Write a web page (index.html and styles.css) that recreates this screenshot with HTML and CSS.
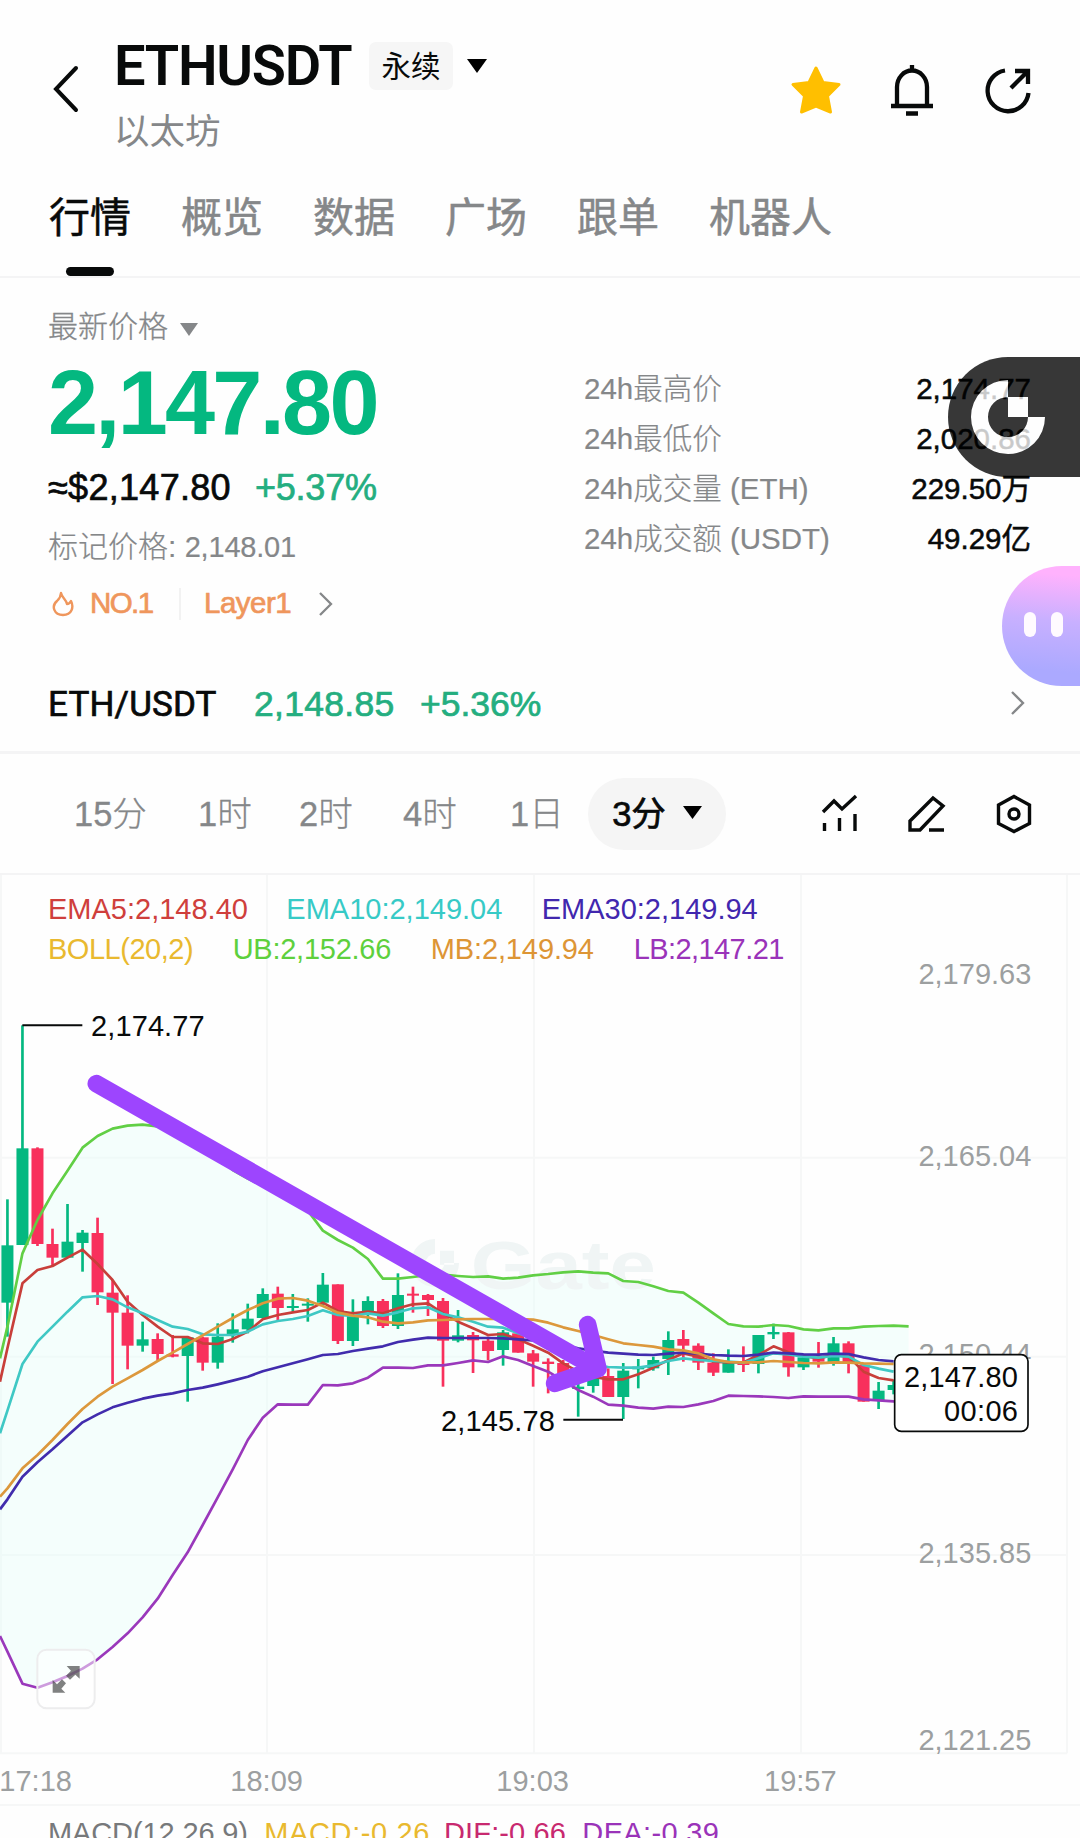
FILE: index.html
```html
<!DOCTYPE html>
<html lang="zh-CN">
<head>
  <meta charset="UTF-8" />
  <meta name="viewport" content="width=device-width, initial-scale=1" />
  <title>ETHUSDT 永续</title>
  <link rel="stylesheet" href="styles.css">
</head>
<body>

  <header class="header">
    <svg class="back" width="28" height="50" viewBox="0 0 28 50"><path d="M25 4 L5 25 L25 46" /></svg>
    <div class="pair">
      <div class="pair-top">
        <h1>ETHUSDT</h1>
        <span class="chip">永续</span>
        <svg class="caret" width="20" height="14" viewBox="0 0 20 14"><path d="M0 0H20L10 14Z" /></svg>
      </div>
      <div class="pair-name">以太坊</div>
    </div>
    <div class="header-icons">
      <svg width="52" height="52" viewBox="0 0 52 52"><path class="star" d="M26 4 L33 18.500 L49 20.500 L37.500 32 L40.500 48 L26 42 L11.500 48 L14.500 32 L3 20.500 L19 18.500 Z" /></svg>
      <svg class="line-icon" width="52" height="52" viewBox="0 0 52 52"><path d="M26 1V7M11 42V23a15 16.500 0 0 1 30 0V42M5 42H47M20 49.500H32" /></svg>
      <svg class="line-icon" width="52" height="52" viewBox="0 0 52 52"><path d="M23 6.500A20.500 20.500 0 1 0 46.500 29M29 24L45 8M33 7H46V20" /></svg>
    </div>
  </header>

  <nav class="tabs">
    <a class="active">行情</a>
    <a>概览</a>
    <a>数据</a>
    <a>广场</a>
    <a>跟单</a>
    <a>机器人</a>
  </nav>

  <section class="quote">
    <div class="quote-left">
      <div class="label">最新价格 <svg width="18" height="13" viewBox="0 0 18 13"><path d="M0 0H18L9 13Z" /></svg></div>
      <div class="price">2,147.80</div>
      <div class="fiat"><span>≈$2,147.80</span><span class="up">+5.37%</span></div>
      <div class="mark">标记价格: <span>2,148.01</span></div>
      <div class="tags">
        <svg class="flame" width="24" height="26" viewBox="0 0 24 26"><path d="M10 2C11 7 15 8 16 13C18 13 19 12 20 10C23 16 21 24 12 24C3 24 0 15 6 10C8 8 10 6 10 2Z" /></svg>
        <span class="rank">NO.1</span>
        <i></i>
        <span class="layer">Layer1</span>
        <svg class="chev" width="14" height="24" viewBox="0 0 14 24"><path d="M1 1L12 12L1 23" /></svg>
      </div>
    </div>
    <div class="stats">
      <div><span>24h最高价</span><b>2,174.77</b></div>
      <div><span>24h最低价</span><b>2,020.86</b></div>
      <div><span>24h成交量 (ETH)</span><b>229.50万</b></div>
      <div><span>24h成交额 (USDT)</span><b>49.29亿</b></div>
    </div>
  </section>

  <section class="spot">
    <span class="spot-pair">ETH/USDT</span>
    <span class="spot-price">2,148.85</span>
    <span class="spot-change">+5.36%</span>
    <svg class="chev" width="14" height="24" viewBox="0 0 14 24"><path d="M1 1L12 12L1 23" /></svg>
  </section>

  <section class="frames">
    <div class="frame-list">
      <span class="f15">15分</span>
      <span class="f1">1时</span>
      <span class="f2">2时</span>
      <span class="f4">4时</span>
      <span class="fd">1日</span>
    </div>
    <div class="frame-active"><span>3分</span><svg width="19" height="13" viewBox="0 0 19 13"><path d="M0 0H19L9.500 13Z" /></svg></div>
    <div class="tools">
      <svg width="40" height="40" viewBox="0 0 40 40"><path d="M3 18L14 7L22 15L36 2M4.500 37V29M19.500 37V24M35 37V20" /></svg>
      <svg width="40" height="40" viewBox="0 0 40 40"><path d="M3 36V27L26 4L36 12L13 36ZM22 36H37" /></svg>
      <svg width="40" height="40" viewBox="0 0 40 40"><path d="M20 2.500L35.500 11V29.500L20 37.500L4.500 29.500V11Z" /><circle cx="20" cy="20" r="5" /></svg>
    </div>
  </section>

  <section class="chart">
    <svg viewBox="0 0 3240 2889">
      <g transform="translate(0 345)">
        <path class="grid" d="M3 -345V2290M801 -345V2290M1602 -345V2290M2403 -345V2290M3201 -345V2290M0 503H3201M0 1100H3201M0 1695H3201M0 2290H3201M0 2445H3240" />
        <path id="band" class="band" />
        <!-- watermark -->
        <g class="watermark">
          <path d="M1305 747A72 72 0 1 0 1377 819H1333A28 28 0 1 1 1305 791ZM1320 782H1362V824H1320Z" />
          <text x="1412" y="896" textLength="556" lengthAdjust="spacingAndGlyphs">Gate</text>
        </g>
        <g class="axis">
          <text x="3094" y="-18">2,179.63</text>
          <text x="3094" y="527">2,165.04</text>
          <text x="3094" y="1121">2,150.44</text>
          <text x="3094" y="1720">2,135.85</text>
          <text x="3094" y="2279">2,121.25</text>
        </g>
        <g class="times">
          <text x="-2" y="2402">17:18</text>
          <text x="691" y="2402">18:09</text>
          <text x="1489" y="2402">19:03</text>
          <text x="2292" y="2402">19:57</text>
        </g>
        <g id="candles"></g>
        <g id="lines"></g>
        <g class="mark-lines"><path d="M67 106H247M1690 1289H1869" /></g>
        <text x="273" y="138" textLength="341">2,174.77</text>
        <text x="1323" y="1322" textLength="342">2,145.78</text>

        <text class="c-red" x="144" y="-212">EMA5:2,148.40</text>
        <text class="c-cyan" x="859" y="-212">EMA10:2,149.04</text>
        <text class="c-indigo" x="1625" y="-212">EMA30:2,149.94</text>
        <text class="c-yellow" x="144" y="-92" textLength="437">BOLL(20,2)</text>
        <text class="c-green" x="698" y="-92" textLength="476">UB:2,152.66</text>
        <text class="c-orange" x="1292" y="-92" textLength="490">MB:2,149.94</text>
        <text class="c-purple" x="1901" y="-92" textLength="452">LB:2,147.21</text>

        <g class="tag">
          <rect x="2684" y="1094" width="400" height="230" rx="20" />
          <text x="3054" y="1192" textLength="342">2,147.80</text>
          <text x="3054" y="1293" textLength="222">00:06</text>
        </g>

        <path class="trend" d="M289 281L1790 1135M1763 1004L1794 1136L1664 1180" />

        <g class="expand">
          <rect x="112" y="1979" width="172" height="176" rx="28" />
          <path d="M200 2028H239V2066L226 2054L210 2069L198 2057L213 2042ZM158 2070L171 2083L186 2068L198 2080L184 2096L196 2108H158Z" />
        </g>

        <text class="c-gray" x="144" y="2559" textLength="600">MACD(12,26,9)</text>
        <text class="c-yellow" x="793" y="2559" textLength="495">MACD:-0.26</text>
        <text class="c-pink" x="1332" y="2559" textLength="366">DIF:-0.66</text>
        <text class="c-purple" x="1747" y="2559" textLength="410">DEA:-0.39</text>
      </g>
    </svg>
  </section>

  <div class="float-gate">
    <svg width="74" height="74" viewBox="0 0 74 74"><path d="M37 0A37 37 0 1 0 74 37H57A20 20 0 1 1 37 17ZM37 17H57V37H37Z" /></svg>
  </div>
  <div class="float-bot"><i></i><i></i></div>

  <script src="chart.js"></script>
</body>
</html>
```
FILE: styles.css
```css
* {
  box-sizing: border-box;
}

body {
  margin: 0;
  position: relative;
  width: 1080px;
  height: 1838px;
  overflow: hidden;
  background: #fefefe;
  color: #080a0a;
  font-family: 'Liberation Sans', 'Noto Sans CJK SC', sans-serif;
}

svg {
  display: block;
}

/* header */
.header {
  display: flex;
  height: 168px;
  padding: 36px 46px 0 51px;
}

.back {
  margin-top: 28px;
  fill: none;
  stroke: #080a0a;
  stroke-width: 4;
  stroke-linecap: round;
}

.pair {
  margin-left: 35px;
}

.pair-top {
  display: flex;
  align-items: center;
  height: 60px;
}

h1 {
  margin: 0;
  width: 255px;
  font-family: Roboto, sans-serif;
  font-size: 56px;
  font-weight: 600;
  line-height: 58px;
  letter-spacing: -1.3px;
}

.chip {
  width: 84px;
  height: 48px;
  background: #f6f6f6;
  border-radius: 7px;
  font-size: 29.500px;
  line-height: 49px;
  text-align: center;
}

.caret {
  margin-left: 14px;
}

.pair-name {
  margin-top: 10px;
  color: #858789;
  font-size: 35.500px;
  line-height: 52px;
}

.header-icons {
  display: flex;
  gap: 44px;
  margin: 28px 0 0 auto;
}

.star {
  fill: #ffbf00;
  stroke: #ffbf00;
  stroke-width: 3;
  stroke-linejoin: round;
}

.line-icon {
  fill: none;
  stroke: #080a0a;
  stroke-width: 4.3;
}

/* tabs */
.tabs {
  display: flex;
  gap: 50px;
  height: 110px;
  padding: 20px 49px 0;
  border-bottom: 2px solid #f4f4f5;
}

.tabs a {
  height: 90px;
  color: #858789;
  font-size: 41px;
  line-height: 60px;
  -webkit-text-stroke: 0.5px currentColor;
}

.tabs .active {
  color: #080a0a;
  display: flex;
  flex-direction: column;
  align-items: center;
}

.tabs .active::after {
  content: "";
  width: 48px;
  height: 9px;
  margin-top: 19px;
  border-radius: 5px;
  background: #080a0a;
}

/* quote */
.quote {
  display: flex;
  justify-content: space-between;
  height: 375px;
  padding: 31px 49px 0 48px;
}

.label {
  display: flex;
  align-items: center;
  gap: 12px;
  height: 40px;
  color: #858789;
  font-size: 30px;
  font-weight: 300;
  line-height: 36px;
  padding-bottom: 4px;
  -webkit-text-stroke: 0.3px currentColor;
}

.label svg {
  margin-top: 4px;
  fill: #858789;
}

.price {
  height: 106px;
  color: #04b880;
  font-size: 90px;
  font-weight: bold;
  line-height: 108px;
  letter-spacing: -2.7px;
}

.fiat {
  display: flex;
  gap: 24px;
  height: 54px;
  margin-top: 5px;
  font-size: 36px;
  line-height: 55px;
  letter-spacing: 0.3px;
  -webkit-text-stroke: 0.7px currentColor;
}

.fiat .up {
  color: #24ae80;
  letter-spacing: -0.2px;
}

.mark {
  height: 60px;
  margin-top: 3px;
  color: #858789;
  font-size: 30px;
  font-weight: 300;
  line-height: 60px;
  white-space: nowrap;
  -webkit-text-stroke: 0.2px currentColor;
}

.mark span {
  font-size: 29px;
  letter-spacing: -0.2px;
}

.tags {
  display: flex;
  align-items: center;
  height: 44px;
  margin-top: 5px;
  color: #ef965c;
  font-size: 29.500px;
  line-height: 42px;
  -webkit-text-stroke: 0.7px currentColor;
}

.flame {
  margin-left: 3px;
  fill: none;
  stroke: #ef965c;
  stroke-width: 2.4;
  stroke-linejoin: round;
}

.tags span {
  padding-bottom: 2px;
}

.rank {
  width: 89px;
  margin-left: 15px;
  letter-spacing: -1.6px;
}

.tags i {
  width: 2px;
  height: 32px;
  background: #f2f2f2;
}

.layer {
  width: 115px;
  margin-left: 23px;
  letter-spacing: -0.5px;
}

.chev {
  fill: none;
  stroke: #858789;
  stroke-width: 2.3;
}

.stats {
  width: 447px;
  padding-top: 54px;
}

.stats div {
  display: flex;
  justify-content: space-between;
  height: 50px;
  color: #858789;
  font-size: 29.500px;
  font-weight: 300;
  line-height: 51px;
  -webkit-text-stroke: 0.2px currentColor;
}

.stats b {
  color: #080a0a;
  font-weight: 400;
  -webkit-text-stroke: 0.5px currentColor;
}

/* spot row */
.spot {
  display: flex;
  align-items: center;
  height: 101px;
  padding: 5px 55px 0 48px;
  border-bottom: 3px solid #f4f4f5;
  color: #24ae80;
  font-size: 35.500px;
  -webkit-text-stroke: 0.7px currentColor;
}

.spot-pair {
  width: 206px;
  color: #080a0a;
  font-family: Roboto, sans-serif;
  font-weight: 400;
  font-size: 35px;
  letter-spacing: 0.15px;
}

.spot-price {
  width: 166px;
  letter-spacing: 0.3px;
}

.spot .chev {
  margin: -4px 0 0 auto;
}

/* time frames */
.frames {
  display: flex;
  align-items: center;
  height: 121px;
  padding: 0 46px 0 74px;
  border-bottom: 2px solid #f4f4f5;
  font-size: 34.500px;
}

.frame-list {
  display: flex;
  width: 514px;
  padding-bottom: 5px;
  color: #858789;
  font-weight: 300;
  -webkit-text-stroke: 0.3px currentColor;
}

.f15 {
  width: 124px;
}

.f1 {
  width: 101px;
}

.f2 {
  width: 104px;
}

.f4 {
  width: 107px;
}

.frame-active {
  display: flex;
  align-items: center;
  justify-content: center;
  gap: 17px;
  width: 138px;
  height: 72px;
  border-radius: 36px;
  background: #f5f5f5;
  -webkit-text-stroke: 0.7px currentColor;
}

.frame-active span {
  padding-bottom: 5px;
}

.frame-active svg {
  margin-top: -2px;
}

.tools {
  display: flex;
  gap: 47px;
  margin-left: auto;
}

.tools svg {
  fill: none;
  stroke: #080a0a;
  stroke-width: 3.400;
}

/* chart, drawn at three units per pixel */
.chart {
  height: 963px;
  overflow: hidden;
}

.chart svg {
  width: 1080px;
  height: 963px;
}

.chart text {
  font-size: 87px;
  fill: #080a0a;
}

.grid {
  stroke: #f6f7f7;
  stroke-width: 6;
}

.band {
  fill: #e6fffb;
  fill-opacity: 0.4;
}

.watermark {
  fill: #f0f5f5;
}

.chart .watermark text {
  font-size: 206px;
  font-weight: bold;
  fill: #f0f5f5;
}

.chart .axis text {
  fill: #9c9fa0;
  text-anchor: end;
}

.chart .times text {
  fill: #9c9fa0;
}

.up-candle {
  fill: #04b880;
}

.down-candle {
  fill: #f8305c;
}

.line {
  fill: none;
  stroke-width: 8;
  stroke-linejoin: round;
}

.mark-lines {
  stroke: #080a0a;
  stroke-width: 6;
}

.chart .c-red { fill: #cf3f3c; }
.chart .c-cyan { fill: #37cac6; }
.chart .c-indigo { fill: #4127ae; }
.chart .c-yellow { fill: #e9b92f; }
.chart .c-green { fill: #5ed03d; }
.chart .c-orange { fill: #dd9535; }
.chart .c-purple { fill: #9a33b9; }
.chart .c-pink { fill: #c8296f; }
.chart .c-gray { fill: #77797b; }

.tag rect {
  fill: #ffffff;
  stroke: #080a0a;
  stroke-width: 5;
}

.chart .tag text {
  text-anchor: end;
}

.trend {
  fill: none;
  stroke: #9d45fe;
  stroke-width: 53;
  stroke-linecap: round;
  stroke-linejoin: round;
}

.expand rect {
  fill: #ffffff;
  fill-opacity: 0.5;
  stroke: #ededee;
  stroke-width: 6;
}

.expand path {
  fill: #3c3d3d;
  fill-opacity: 0.65;
}

/* floating buttons */
.float-gate {
  position: absolute;
  right: 0;
  top: 357px;
  width: 132px;
  height: 120px;
  padding: 23px 0 0 23px;
  border-radius: 60px 0 0 60px;
  background: #000;
  opacity: 0.78;
}

.float-gate svg {
  fill: #fff;
}

.float-bot {
  position: absolute;
  right: 0;
  top: 566px;
  display: flex;
  gap: 15px;
  width: 78px;
  height: 120px;
  padding: 46px 0 0 22px;
  border-radius: 60px 0 0 60px;
  background: linear-gradient(185deg, #ffb2fd 8%, #c8b0ff 45%, #aba9ff 85%);
}

.float-bot i {
  width: 12px;
  height: 25px;
  border-radius: 6px;
  background: #fffaff;
}
```
FILE: chart.js
```javascript
// one entry per 3 minute candle: direction, high, low, body top, body bottom
const candles = [
  ['u', 628, 1040, 766, 938], ['u', 106, 765, 475, 765], ['d', 472, 768, 475, 762],
  ['d', 716, 828, 762, 803], ['u', 642, 803, 755, 803], ['u', 720, 845, 728, 759],
  ['d', 683, 945, 729, 907], ['d', 870, 1182, 908, 968], ['d', 916, 1138, 968, 1067],
  ['u', 995, 1085, 1048, 1067], ['d', 1030, 1112, 1047, 1092], ['d', 1035, 1102, 1093, 1100],
  ['u', 1040, 1235, 1042, 1098], ['d', 1040, 1142, 1042, 1118], ['u', 1000, 1136, 1040, 1118],
  ['u', 970, 1058, 1018, 1032], ['u', 941, 1030, 986, 1018], ['u', 895, 985, 912, 984],
  ['d', 890, 990, 911, 954], ['u', 912, 965, 948, 954], ['u', 925, 995, 941, 947],
  ['u', 849, 945, 884, 938], ['d', 883, 1062, 883, 1053], ['u', 928, 1068, 975, 1053],
  ['u', 919, 1003, 933, 965], ['d', 927, 1014, 933, 1008], ['u', 850, 1017, 915, 1008],
  ['d', 890, 968, 911, 917], ['d', 912, 978, 915, 930], ['d', 924, 1190, 933, 1052],
  ['u', 960, 1057, 1036, 1052], ['d', 1026, 1149, 1035, 1051], ['d', 1040, 1111, 1052, 1083],
  ['u', 1020, 1127, 1027, 1080], ['d', 1025, 1088, 1030, 1088], ['d', 1080, 1190, 1090, 1115],
  ['d', 1105, 1210, 1115, 1122], ['d', 1110, 1160, 1119, 1160], ['u', 1170, 1280, 1190, 1197],
  ['u', 1140, 1208, 1155, 1188], ['d', 1135, 1221, 1158, 1221], ['u', 1119, 1287, 1142, 1221],
  ['u', 1107, 1195, 1130, 1138], ['u', 1100, 1142, 1110, 1135], ['u', 1024, 1155, 1050, 1107],
  ['d', 1020, 1115, 1047, 1067], ['d', 1060, 1140, 1067, 1118], ['d', 1090, 1158, 1118, 1148],
  ['u', 1078, 1148, 1115, 1148], ['d', 1069, 1146, 1118, 1125], ['u', 1035, 1150, 1035, 1122],
  ['u', 1001, 1047, 1026, 1033], ['d', 1026, 1160, 1027, 1132], ['u', 1100, 1140, 1102, 1132],
  ['d', 1056, 1133, 1100, 1115], ['u', 1041, 1127, 1060, 1118], ['d', 1054, 1150, 1060, 1120],
  ['d', 1125, 1235, 1125, 1235], ['u', 1176, 1257, 1202, 1230], ['u', 1170, 1213, 1185, 1200]
];

// first value of each series sits on the left edge, the rest on candle centres
const ub = [1105, 1010, 790, 690, 610, 542, 473, 438, 416, 407, 404, 409, 418, 440, 465, 500, 540, 566, 587, 605, 628, 662, 722, 750, 773, 807, 866, 866, 861, 855, 854, 858, 861, 859, 866, 863, 856, 852, 847, 844, 848, 850, 873, 876, 889, 903, 908, 938, 970, 1002, 1009, 1010, 1005, 1008, 1018, 1021, 1015, 1015, 1010, 1008, 1007, 1009];
const lb = [1938, 1985, 2081, 2093, 2077, 2058, 2036, 2008, 1971, 1930, 1882, 1826, 1755, 1687, 1605, 1522, 1438, 1350, 1283, 1243, 1244, 1244, 1185, 1186, 1180, 1163, 1133, 1133, 1134, 1126, 1126, 1119, 1111, 1116, 1099, 1110, 1128, 1145, 1172, 1200, 1220, 1244, 1247, 1253, 1256, 1250, 1251, 1243, 1233, 1217, 1218, 1219, 1221, 1224, 1219, 1220, 1220, 1220, 1228, 1231, 1234, 1235];
const mb = [1520, 1495, 1435, 1395, 1350, 1302, 1257, 1220, 1190, 1165, 1140, 1113, 1088, 1062, 1036, 1010, 984, 960, 940, 926, 924, 932, 948, 968, 977, 982, 995, 1000, 997, 991, 990, 988, 987, 987, 987, 987, 989, 998, 1012, 1023, 1035, 1048, 1060, 1065, 1070, 1078, 1081, 1090, 1108, 1116, 1117, 1117, 1113, 1116, 1119, 1120, 1117, 1118, 1120, 1121, 1122];
const ema5 = [1175, 1075, 880, 840, 828, 803, 779, 822, 870, 935, 975, 1010, 1041, 1041, 1060, 1062, 1047, 1025, 988, 975, 967, 960, 938, 963, 970, 965, 970, 955, 943, 940, 970, 995, 1015, 1035, 1032, 1048, 1067, 1088, 1120, 1145, 1160, 1168, 1168, 1153, 1133, 1110, 1090, 1100, 1115, 1117, 1117, 1095, 1069, 1087, 1098, 1105, 1095, 1100, 1145, 1164, 1171];
const ema10 = [1330, 1262, 1122, 1055, 1010, 965, 922, 918, 928, 952, 970, 990, 1010, 1017, 1033, 1035, 1035, 1025, 1003, 993, 987, 978, 961, 975, 978, 970, 977, 967, 955, 952, 972, 982, 995, 1010, 1013, 1030, 1045, 1060, 1090, 1110, 1125, 1131, 1133, 1133, 1126, 1113, 1105, 1110, 1113, 1115, 1118, 1105, 1090, 1093, 1100, 1103, 1098, 1100, 1125, 1136, 1145];
const ema30 = [1558, 1528, 1460, 1417, 1378, 1337, 1297, 1273, 1252, 1238, 1226, 1217, 1210, 1200, 1193, 1183, 1172, 1160, 1144, 1132, 1120, 1108, 1095, 1092, 1083, 1076, 1069, 1056, 1049, 1043, 1044, 1044, 1044, 1044, 1045, 1048, 1051, 1055, 1065, 1075, 1082, 1088, 1091, 1094, 1095, 1091, 1088, 1091, 1095, 1097, 1098, 1094, 1088, 1090, 1093, 1094, 1091, 1092, 1102, 1110, 1114];

const NS = 'http://www.w3.org/2000/svg';
const cx = i => 22.3 + 45.06 * i;
const points = s => s.map((y, i) => `${i === 0 ? 0 : cx(i - 1).toFixed(1)} ${y}`);

function add(parent, name, attrs) {
  const el = document.createElementNS(NS, name);
  for (const key in attrs) el.setAttribute(key, attrs[key]);
  parent.appendChild(el);
}

const candleGroup = document.getElementById('candles');
candles.forEach(([dir, high, low, top, bottom], i) => {
  const cls = dir === 'u' ? 'up-candle' : 'down-candle';
  add(candleGroup, 'rect', { class: cls, x: cx(i) - 4, y: high, width: 8, height: low - high });
  add(candleGroup, 'rect', { class: cls, x: cx(i) - 18, y: top, width: 36, height: bottom - top });
});

document.getElementById('band').setAttribute('d', 'M' + points(ub).concat(points(lb).reverse()).join('L') + 'Z');

const lineGroup = document.getElementById('lines');
[[ub, '#61cf45'], [lb, '#9a38bb'], [ema5, '#c83f3a'], [ema10, '#3fc8c4'], [ema30, '#412cad'], [mb, '#dc983c']].forEach(([s, color]) => {
  add(lineGroup, 'path', { class: 'line', stroke: color, d: 'M' + points(s).join('L') });
});
```
